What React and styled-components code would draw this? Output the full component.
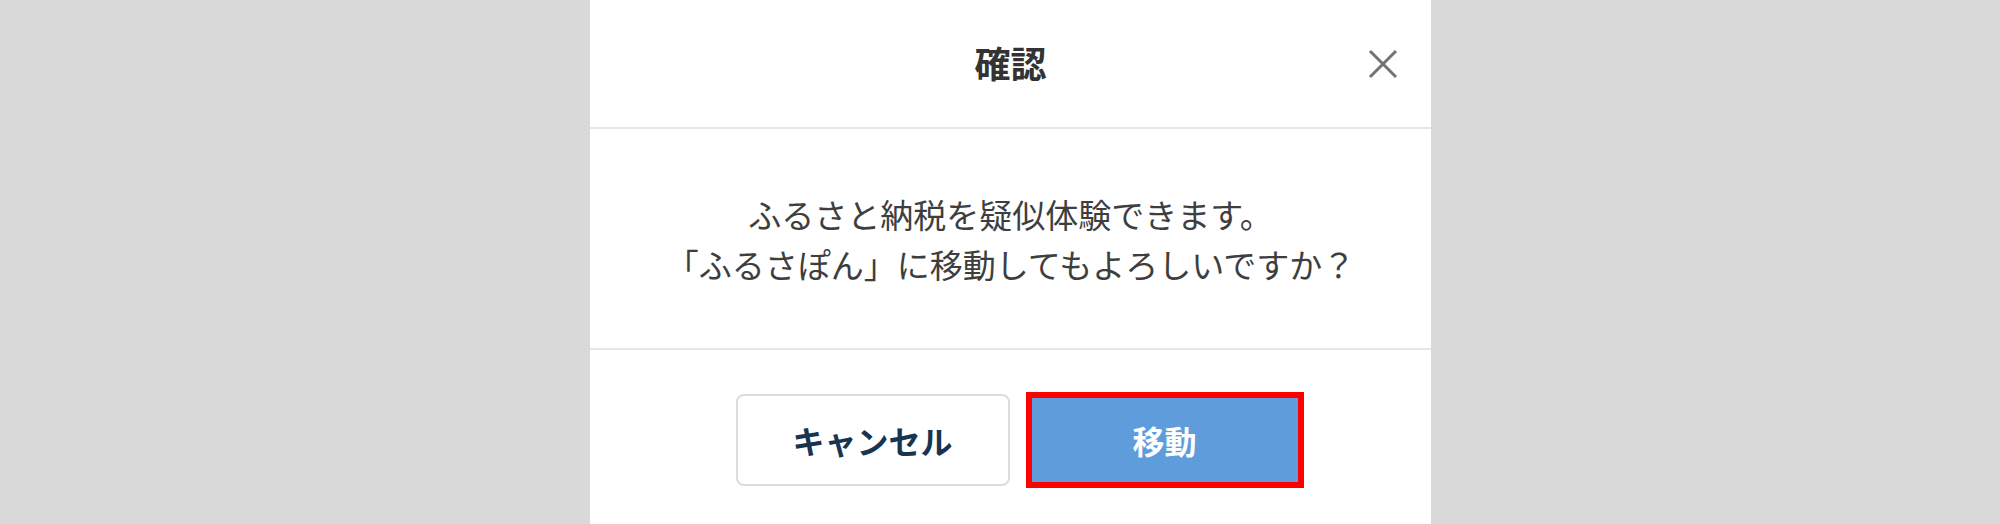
import styled, { createGlobalStyle } from 'styled-components'

const GlobalStyle = createGlobalStyle`
  html, body {
    margin: 0;
    padding: 0;
    background: #d9d9d9;
  }
  body {
    font-family: "Noto Sans CJK JP", "Noto Sans", sans-serif;
  }
`

const StyledOverlay = styled.div`
  display: flex;
  min-height: 524px;
  padding-left: 590px;
`
const StyledModal = styled.div`
  width: 841px;
  background: #fff;
  display: flex;
  flex-direction: column;
`
const StyledHeader = styled.header`
  display: grid;
  grid-template-columns: 1fr auto 1fr;
  align-items: center;
  height: 127px;
  border-bottom: 2px solid #e6e6e6;
`
const StyledTitle = styled.h1`
  grid-column: 2;
  margin: 0;
  font-size: 36px;
  font-weight: 700;
  color: #333;
  letter-spacing: 0;
  line-height: 1;
  transform: translateY(-2px);
`
const StyledClose = styled.button`
  grid-column: 3;
  justify-self: end;
  margin-right: 33px;
  width: 30px;
  height: 30px;
  padding: 0;
  border: none;
  background: none;
  display: flex;
  align-items: center;
  justify-content: center;
  cursor: pointer;
`
const StyledBody = styled.div`
  height: 219px;
  display: flex;
  align-items: center;
  justify-content: center;
  border-bottom: 2px solid #e6e6e6;
`
const StyledMessage = styled.p`
  margin: 0;
  padding-top: 0;
  font-size: 33px;
  line-height: 50px;
  color: #3e3e3e;
  text-align: center;
`
const StyledFooter = styled.footer`
  display: flex;
  justify-content: center;
  gap: 16px;
  padding: 44px 0 0 18px;
`
const StyledButton = styled.button`
  box-sizing: border-box;
  width: ${p => (p.$primary ? '278px' : '274px')};
  height: ${p => (p.$primary ? '96px' : '92px')};
  margin-top: ${p => (p.$primary ? '-2px' : '0')};
  border-radius: ${p => (p.$primary ? '0' : '8px')};
  border: ${p => (p.$primary ? '6px solid #ff0000' : '2px solid #dcdcdc')};
  background: ${p => (p.$primary ? '#5f9cdb' : '#fff')};
  color: ${p => (p.$primary ? '#fff' : '#183451')};
  font-family: "Noto Sans CJK JP", "Noto Sans", sans-serif;
  font-size: 32px;
  font-weight: 700;
  cursor: pointer;
`

function CloseIcon() {
    return (
        <svg width="30" height="30" viewBox="0 0 30 30">
            <path d="M2 2 L28 28 M28 2 L2 28" stroke="#727272" strokeWidth="3" fill="none"/>
        </svg>
    )
}

function App() {
    return (
        <StyledOverlay>
            <GlobalStyle/>
            <StyledModal>
                <StyledHeader>
                    <StyledTitle>確認</StyledTitle>
                    <StyledClose aria-label="閉じる">
                        <CloseIcon/>
                    </StyledClose>
                </StyledHeader>
                <StyledBody>
                    <StyledMessage>
                        ふるさと納税を疑似体験できます。<br/>
                        「ふるさぽん」に移動してもよろしいですか？
                    </StyledMessage>
                </StyledBody>
                <StyledFooter>
                    <StyledButton>キャンセル</StyledButton>
                    <StyledButton $primary>移動</StyledButton>
                </StyledFooter>
            </StyledModal>
        </StyledOverlay>
    )
}

export default App
